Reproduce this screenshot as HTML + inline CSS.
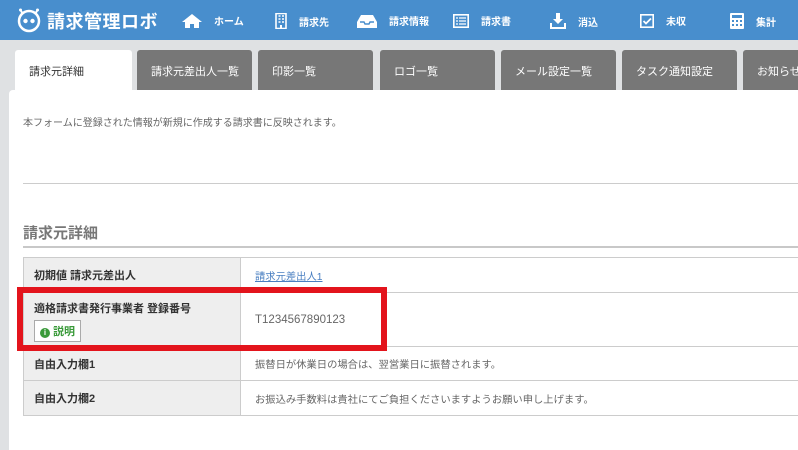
<!DOCTYPE html>
<html><head><meta charset="utf-8"><style>
*{margin:0;padding:0;box-sizing:border-box}
body{width:798px;height:442px;overflow:hidden;background:#dfe1e3;font-family:"Liberation Sans","Noto Sans CJK JP",sans-serif;position:relative}
.hdr{position:absolute;left:0;top:0;width:798px;height:40px;background:#488ecd;color:#fff}
.hdr .logo{position:absolute;left:47px;top:8px;font-size:18px;font-weight:bold;letter-spacing:0.5px}
.nav{position:absolute;top:13px;font-size:10px;font-weight:bold;display:flex;align-items:center}
.nav svg{margin-right:12px}
.tab{position:absolute;top:50px;height:40px;background:#777;color:#fff;font-size:11px;padding:13px 0 0 14px;border-radius:3px 3px 0 0;width:115px}
.tab.a{background:#fff;color:#333;left:15px;width:117px;height:42px}
.panel{position:absolute;left:9px;top:90px;width:800px;height:360px;background:#fff;border-radius:4px 0 0 0}
.abs{position:absolute}
table{position:absolute;left:23px;top:257px;width:790px;border-collapse:collapse;font-size:10.3px}
td{border:1px solid #ccc;padding:0 10px 0 14px}
td.l{background:#eee;width:217px;font-weight:bold;color:#333;font-size:11px;padding-left:10px}
td.r{color:#666}
</style></head><body>
<div class="hdr">
 <svg class="abs" style="left:15px;top:5px" width="28" height="28" viewBox="0 0 28 28"><circle cx="14" cy="16" r="10" fill="none" stroke="#fff" stroke-width="2.5"/><circle cx="10.5" cy="16" r="2.2" fill="#fff"/><circle cx="17.5" cy="16" r="2.2" fill="#fff"/><path d="M6 6l2 3M22 6l-2 3" stroke="#fff" stroke-width="2"/><circle cx="5.5" cy="5" r="1.5" fill="#fff"/><circle cx="22.5" cy="5" r="1.5" fill="#fff"/></svg>
 <div class="logo">請求管理ロボ</div>
 <div class="nav" style="left:182px"><svg width="20" height="14" viewBox="0 0 20 14"><path d="M10 0L0 8h3v6h5v-4h4v4h5V8h3z" fill="#fff"/></svg>ホーム</div>
 <div class="nav" style="left:275px"><svg width="12" height="16" viewBox="0 0 12 16"><rect x="1" y="0.5" width="10" height="15" fill="none" stroke="#fff" stroke-width="1.6"/><path d="M3.5 3h2M7 3h2M3.5 6h2M7 6h2M3.5 9h2M7 9h2" stroke="#fff" stroke-width="1.4"/><rect x="5" y="12" width="2" height="4" fill="#fff"/></svg>請求先</div>
 <div class="nav" style="left:357px"><svg width="20" height="14" viewBox="0 0 20 14"><path d="M4 1h12l4 7v6H0V8z" fill="#fff"/><path d="M3 8h4l1 2h4l1-2h4" stroke="#488ecd" stroke-width="1.4" fill="none"/></svg>請求情報</div>
 <div class="nav" style="left:453px"><svg width="16" height="14" viewBox="0 0 16 14"><rect x="0.8" y="0.8" width="14.4" height="12.4" fill="none" stroke="#fff" stroke-width="1.6"/><path d="M3 4h2M6 4h7M3 7h2M6 7h7M3 10h2M6 10h7" stroke="#fff" stroke-width="1.3"/></svg>請求書</div>
 <div class="nav" style="left:550px"><svg width="16" height="16" viewBox="0 0 16 16"><path d="M6 0h4v6h3l-5 5-5-5h3z" fill="#fff"/><path d="M1 10v5h14v-5" stroke="#fff" stroke-width="2" fill="none"/></svg>消込</div>
 <div class="nav" style="left:640px"><svg width="14" height="14" viewBox="0 0 14 14"><rect x="0.8" y="0.8" width="12.4" height="12.4" fill="none" stroke="#fff" stroke-width="1.6"/><path d="M3.5 7l2.5 2.5 5-5" stroke="#fff" stroke-width="1.8" fill="none"/></svg>未収</div>
 <div class="nav" style="left:730px"><svg width="14" height="16" viewBox="0 0 14 16"><rect x="0" y="0" width="14" height="16" rx="1" fill="#fff"/><rect x="2" y="2" width="10" height="3" fill="#488ecd"/><path d="M2 7h2v2H2zM6 7h2v2H6zM10 7h2v2h-2zM2 11h2v2H2zM6 11h2v2H6zM10 11h2v2h-2z" fill="#488ecd"/></svg>集計</div>
</div>
<div class="tab a">請求元詳細</div>
<div class="tab" style="left:137px">請求元差出人一覧</div>
<div class="tab" style="left:258px">印影一覧</div>
<div class="tab" style="left:380px">ロゴ一覧</div>
<div class="tab" style="left:501px">メール設定一覧</div>
<div class="tab" style="left:622px">タスク通知設定</div>
<div class="tab" style="left:743px">お知らせ</div>
<div class="panel"></div>
<div class="abs" style="left:23px;top:114px;font-size:10px;color:#666">本フォームに登録された情報が新規に作成する請求書に反映されます。</div>
<div class="abs" style="left:23px;top:183px;width:780px;height:1px;background:#ccc"></div>
<div class="abs" style="left:23px;top:222px;font-size:15px;font-weight:bold;color:#777">請求元詳細</div>
<div class="abs" style="left:23px;top:246px;width:780px;height:2px;background:#c8c8c8"></div>
<table>
<tr style="height:35px"><td class="l">初期値 請求元差出人</td><td class="r"><span style="color:#4a7fc1;text-decoration:underline">請求元差出人1</span></td></tr>
<tr style="height:54px"><td class="l"><div style="margin-top:2px">適格請求書発行事業者 登録番号</div><div style="display:inline-block;margin-top:4px;border:1px solid #aaa;background:#fff;padding:2px 5px;color:#3a9a3a;font-size:11px"><span style="display:inline-block;width:10px;height:10px;border-radius:5px;background:#3a9a3a;color:#fff;font-size:8px;text-align:center;line-height:10px;margin-right:3px">i</span>説明</div></td><td class="r" style="font-size:11.5px">T1234567890123</td></tr>
<tr style="height:34px"><td class="l">自由入力欄1</td><td class="r">振替日が休業日の場合は、翌営業日に振替されます。</td></tr>
<tr style="height:35px"><td class="l">自由入力欄2</td><td class="r">お振込み手数料は貴社にてご負担くださいますようお願い申し上げます。</td></tr>
</table>
<div class="abs" style="left:17px;top:287px;width:370px;height:64px;border:6px solid #e3141c"></div>
</body></html>
